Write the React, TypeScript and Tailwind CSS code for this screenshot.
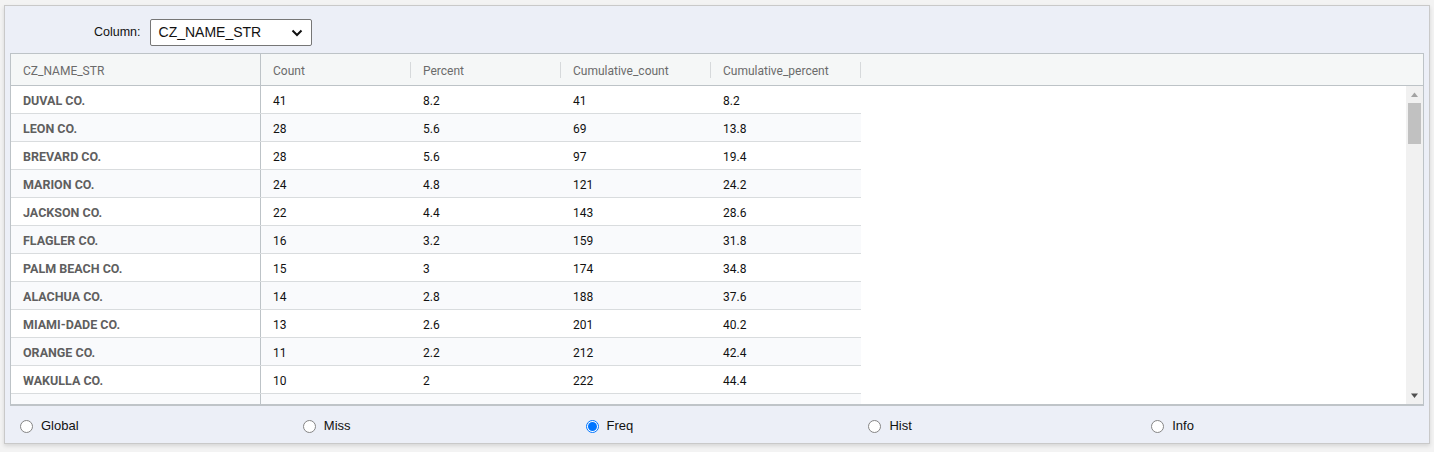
import React from 'react';

const rows: [string, number, number, number, number][] = [
  ['DUVAL CO.', 41, 8.2, 41, 8.2],
  ['LEON CO.', 28, 5.6, 69, 13.8],
  ['BREVARD CO.', 28, 5.6, 97, 19.4],
  ['MARION CO.', 24, 4.8, 121, 24.2],
  ['JACKSON CO.', 22, 4.4, 143, 28.6],
  ['FLAGLER CO.', 16, 3.2, 159, 31.8],
  ['PALM BEACH CO.', 15, 3, 174, 34.8],
  ['ALACHUA CO.', 14, 2.8, 188, 37.6],
  ['MIAMI-DADE CO.', 13, 2.6, 201, 40.2],
  ['ORANGE CO.', 11, 2.2, 212, 42.4],
  ['WAKULLA CO.', 10, 2, 222, 44.4],
  ['', 0, 0, 0, 0],
];

const headers = ['Count', 'Percent', 'Cumulative_count', 'Cumulative_percent'];
const tabs = ['Global', 'Miss', 'Freq', 'Hist', 'Info'];

const Radio = ({ checked }: { checked?: boolean }) =>
  checked ? (
    <span className="w-[13px] h-[13px] rounded-full border border-[#0075ff] flex items-center justify-center bg-white">
      <span className="w-[9px] h-[9px] rounded-full bg-[#0075ff]" />
    </span>
  ) : (
    <span className="w-[13px] h-[13px] rounded-full border border-[#858585] bg-white" />
  );

export default function App() {
  return (
    <div className="w-[1434px] h-[452px] bg-[#f3f3f3] pl-[4px] pt-[5px]" style={{ fontFamily: 'Roboto, "Open Sans", sans-serif' }}>
      <div className="w-[1426px] h-[439px] bg-[#eceff7] border border-[#c9c9c9] shadow-[0_2px_4px_rgba(0,0,0,0.12)] flex flex-col px-[5px]">
        <div className="h-[47px] flex items-center pt-[6px]">
          <span className="ml-[84px] mr-[9px] text-[12.5px] text-[#111]" style={{ fontFamily: '"Liberation Sans", Arial, sans-serif' }}>Column:</span>
          <div className="w-[162px] h-[27px] bg-white border border-[#767676] rounded-[2px] flex items-center justify-between pl-[8px] pr-[8px]" style={{ fontFamily: '"Liberation Sans", Arial, sans-serif' }}>
            <span className="text-[14px] text-[#111]">CZ_NAME_STR</span>
            <svg width="12" height="8" viewBox="0 0 12 8"><path d="M1.5 1.5 L6 6 L10.5 1.5" fill="none" stroke="#111" strokeWidth="2" /></svg>
          </div>
        </div>
        <div className="h-[353px] border border-[#bdc3c7] border-b-2 border-b-[#bfc4c8] bg-white flex flex-col">
          <div className="h-[32px] bg-[#f5f7f7] border-b border-[#bdc3c7] flex items-center text-[12px] text-[#6b6b6b] shrink-0">
            <div className="w-[250px] h-full flex items-center pl-[12px] border-r border-[#bdc3c7]">
              <span className="pt-[3px]">CZ_NAME_STR</span>
            </div>
            {headers.map((h) => (
              <div key={h} className="w-[150px] flex items-center">
                <span className="pl-[12px] pt-[3px] flex-1">{h}</span>
                <span className="w-px h-[16px] bg-[#d6d9db]" />
              </div>
            ))}
          </div>
          <div className="flex-1 flex overflow-hidden">
            <div className="flex-1 overflow-hidden">
              {rows.map((r, i) => (
                <div key={i} className={`h-[28px] flex text-[12px] w-[850px] border-b border-[#d9dcde] ${i % 2 ? 'bg-[#f9fafc]' : 'bg-white'}`}>
                  <div className="w-[250px] h-full flex items-center pl-[12px] border-r border-[#bdc3c7] font-bold text-[12.5px] text-[#5f5f5f]">
                    <span className="pt-[3px]">{r[0]}</span>
                  </div>
                  {r[0] ? (
                    [r[1], r[2], r[3], r[4]].map((v, j) => (
                      <div key={j} className="w-[150px] flex items-center pl-[12px] pt-[2px] text-[#111]">{v}</div>
                    ))
                  ) : null}
                </div>
              ))}
            </div>
            <div className="w-[17px] bg-[#f1f1f1] flex flex-col items-center">
              <svg width="17" height="17" viewBox="0 0 17 17"><path d="M5 11 L8.5 6.5 L12 11 Z" fill="#a3a3a3" /></svg>
              <div className="w-[13px] h-[41px] bg-[#c1c1c1]" />
              <div className="flex-1" />
              <svg width="17" height="17" viewBox="0 0 17 17"><path d="M5 6.5 L8.5 11 L12 6.5 Z" fill="#505050" /></svg>
            </div>
          </div>
        </div>
        <div className="flex-1 grid grid-cols-5 items-center pt-[3px]" style={{ fontFamily: '"Liberation Sans", Arial, sans-serif' }}>
          {tabs.map((t) => (
            <label key={t} className="flex items-center gap-[8px] pl-[10px] text-[13px] text-[#111]">
              <Radio checked={t === 'Freq'} />
              <span>{t}</span>
            </label>
          ))}
        </div>
      </div>
    </div>
  );
}
